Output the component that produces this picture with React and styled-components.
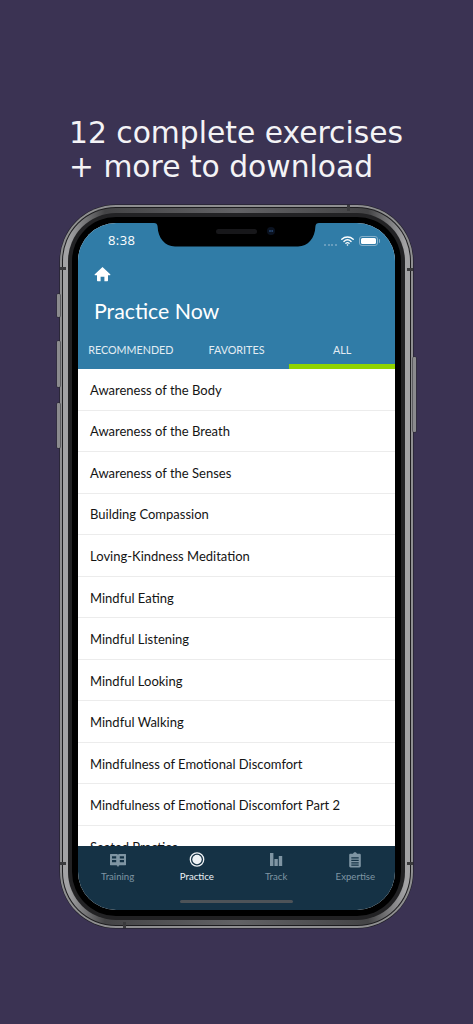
import React from "react";
import styled, { createGlobalStyle } from "styled-components";

const Global = createGlobalStyle`
  html, body { margin: 0; padding: 0; background: #3b3353; }
  #root { width: 473px; height: 1024px; overflow: hidden; }
`;

const Page = styled.div`
  width: 473px;
  height: 1024px;
  background: #3b3353;
  display: flex;
  flex-direction: column;
  align-items: flex-start;
`;

const Headline = styled.h1`
  margin: 116px 0 0 69px;
  height: 89px;
  font: 400 29.75px/34px "DejaVu Sans", sans-serif;
  color: #f4f3f6;
  white-space: nowrap;
`;

const Phone = styled.div`
  position: relative;
  box-sizing: border-box;
  width: 353px;
  height: 723px;
  margin-left: 60px;
  padding: 2px;
  border-radius: 56px;
  background: #8f8f91;
  box-shadow: 0 0 0 0.5px #1c1c20;
`;

const InnerEdge = styled.div`
  box-sizing: border-box;
  height: 100%;
  padding: 1px;
  border-radius: 54px;
  background: #1d1d1f;
`;

const SteelRing = styled.div`
  box-sizing: border-box;
  height: 100%;
  padding: 5px;
  border-radius: 53px;
  background: linear-gradient(
    90deg,
    #a2a2a4 0,
    #a2a2a4 5px,
    #444446 42px,
    #626265 50%,
    #444446 calc(100% - 42px),
    #a2a2a4 calc(100% - 5px),
    #a2a2a4 100%
  );
`;

const DarkRing = styled.div`
  box-sizing: border-box;
  height: 100%;
  padding: 4px;
  border-radius: 48px;
  background: #222224;
`;

const Bezel = styled.div`
  box-sizing: border-box;
  height: 100%;
  padding: 6px;
  border-radius: 44px;
  background: #000;
`;

const Screen = styled.div`
  position: relative;
  height: 100%;
  display: flex;
  flex-direction: column;
  border-radius: 38px;
  overflow: hidden;
  background: #fff;
`;

const SideButton = styled.span`
  position: absolute;
  width: 3px;
  border-radius: 1px;
  background: #8b8b8e;
  box-shadow: 0 0 0 0.5px #2c2c30;
  left: ${(p) => (p.$right ? "auto" : "-3px")};
  right: ${(p) => (p.$right ? "-3px" : "auto")};
  top: ${(p) => p.$top}px;
  height: ${(p) => p.$h}px;
`;

const BandTick = styled.span`
  position: absolute;
  background: #3a3a3c;
  left: ${(p) => (p.$x === undefined ? (p.$side === "left" ? "0" : "auto") : `${p.$x}px`)};
  right: ${(p) => (p.$side === "right" ? "0" : "auto")};
  top: ${(p) => (p.$y === undefined ? (p.$side === "top" ? "0" : "auto") : `${p.$y}px`)};
  bottom: ${(p) => (p.$side === "bottom" ? "0" : "auto")};
  width: ${(p) => (p.$x === undefined ? "6px" : "2.500px")};
  height: ${(p) => (p.$x === undefined ? "2.500px" : "6px")};
`;

const Notch = styled.svg`
  position: absolute;
  top: 0;
  left: 76px;
  width: 165px;
  height: 24px;
`;

const Header = styled.header`
  display: flex;
  flex-direction: column;
  height: 146px;
  flex: none;
  background: #307ca7;
  color: #fff;
`;

const StatusBar = styled.div`
  display: flex;
  align-items: center;
  justify-content: space-between;
  height: 18px;
  padding: 8px 17px 1px 30px;
`;

const Clock = styled.span`
  font: 500 13px/18px "Open Sans", sans-serif;
  letter-spacing: 0.4px;
`;

const StatusIcons = styled.div`
  display: flex;
  align-items: center;
  gap: 4px;
  margin-top: 2px;
`;

const Signal = styled.div`
  display: flex;
  gap: 1.700px;
  margin-top: 7px;
`;

const SignalDot = styled.i`
  width: 2px;
  height: 2px;
  border-radius: 50%;
  background: #7ba9c5;
`;

const Battery = styled.div`
  position: relative;
  box-sizing: border-box;
  width: 19px;
  height: 10px;
  padding: 1px;
  border: 1px solid #86b0ca;
  border-radius: 3px;
  margin-left: 1px;
  &::before {
    content: "";
    display: block;
    height: 100%;
    border-radius: 1.500px;
    background: #fff;
  }
  &::after {
    content: "";
    position: absolute;
    right: -3px;
    top: 2px;
    width: 1.500px;
    height: 4px;
    border-radius: 0 1px 1px 0;
    background: #86b0ca;
  }
`;

const HomeRow = styled.div`
  height: 18px;
  margin-top: 16px;
  padding-left: 16px;
`;

const HomeGlyph = styled.svg`
  display: block;
  width: 17px;
  height: 16px;
`;

const Title = styled.h2`
  margin: 12px 0 0 16px;
  font: 400 21.300px/30px Lato, sans-serif;
  color: #fff;
`;

const Tabs = styled.nav`
  display: grid;
  grid-template-columns: repeat(3, 1fr);
  margin-top: auto;
  height: 42px;
`;

const Tab = styled.div`
  box-sizing: border-box;
  padding-top: 15px;
  text-align: center;
  font: 400 10.750px/16px Lato, sans-serif;
  color: #e3edf3;
  border-bottom: 5px solid ${(p) => (p.$active ? "#8fd400" : "transparent")};
`;

const List = styled.ul`
  flex: 1;
  min-height: 0;
  margin: 0;
  padding: 0;
  list-style: none;
  overflow: hidden;
  background: #fff;
`;

const Row = styled.li`
  box-sizing: border-box;
  height: 41.550px;
  padding: 1px 0 0 12px;
  display: flex;
  align-items: center;
  border-bottom: 1px solid #ececec;
  font: 400 13px/20px Lato, sans-serif;
  color: #141414;
`;

const TabBar = styled.footer`
  position: relative;
  flex: none;
  height: 64px;
  display: grid;
  grid-template-columns: repeat(4, 79.250px);
  background: #153245;
`;

const TabItem = styled.div`
  display: flex;
  flex-direction: column;
  align-items: center;
  padding-top: 6px;
  color: ${(p) => (p.$active ? "#eef2f5" : "#7f95a3")};
  font: 400 9.650px/14px Lato, sans-serif;
`;

const IconBox = styled.svg`
  width: 18px;
  height: 17px;
  margin-bottom: 0;
  display: block;
`;

const HomeIndicator = styled.div`
  position: absolute;
  left: 102px;
  bottom: 7px;
  width: 113px;
  height: 3px;
  border-radius: 2px;
  background: #4d5358;
`;

const items = [
  "Awareness of the Body",
  "Awareness of the Breath",
  "Awareness of the Senses",
  "Building Compassion",
  "Loving-Kindness Meditation",
  "Mindful Eating",
  "Mindful Listening",
  "Mindful Looking",
  "Mindful Walking",
  "Mindfulness of Emotional Discomfort",
  "Mindfulness of Emotional Discomfort Part 2",
  "Seated Practice",
];

const BookIcon = () => (
  <IconBox viewBox="0 0 18 17" fill="currentColor">
    <path fillRule="evenodd" d="M1.500 2h6c.7 0 1.200.2 1.500.6.300-.4.800-.6 1.500-.6h6c.3 0 .5.200.5.500v10.300c0 .3-.2.500-.5.500h-5.800c-.6 0-1 .3-1 .7 0 .4-.3.700-.7.700s-.7-.3-.7-.7c0-.4-.4-.7-1-.7H1.500c-.3 0-.5-.2-.5-.5V2.500c0-.3.200-.5.500-.5zM3 4.300v2.300h4.200V4.300zM10.800 4.300v2.300H15V4.300zM3 8v2.300h4.200V8zM10.800 8v2.300H15V8z" />
  </IconBox>
);

const RingIcon = () => (
  <IconBox viewBox="0 0 18 17" fill="none">
    <circle cx="9" cy="7.500" r="6.700" stroke="currentColor" strokeWidth="1.300" />
    <circle cx="9" cy="7.500" r="4.700" fill="currentColor" />
  </IconBox>
);

const BarsIcon = () => (
  <IconBox viewBox="0 0 18 17" fill="currentColor">
    <rect x="3" y="1" width="3.400" height="13" />
    <rect x="7.400" y="7" width="3.400" height="7" />
    <rect x="11.800" y="4" width="3.400" height="10" />
  </IconBox>
);

const ClipboardIcon = () => (
  <IconBox viewBox="0 0 18 17" fill="currentColor">
    <path fillRule="evenodd" d="M7 1.800C7.200.8 8 .2 9 .2s1.800.6 2 1.600h2.400c.9 0 1.400.5 1.400 1.400v10.900c0 .9-.5 1.400-1.400 1.400H4.600c-.9 0-1.400-.5-1.400-1.400V3.200c0-.9.500-1.400 1.400-1.400zM5.300 5.300v1.200h7.400V5.300zM5.300 7.800V9h7.400V7.800zM5.300 10.300v1.200h7.400v-1.200zM5.300 12.500v1.200h7.400v-1.200z" />
  </IconBox>
);

const WifiIcon = () => (
  <svg width="13" height="10" viewBox="0 0 13 10" fill="none" stroke="#fff" strokeLinecap="round">
    <path d="M.8 3.300C4 .3 9 .3 12.200 3.300" strokeWidth="1.400" />
    <path d="M2.900 5.400c2.100-1.900 5.100-1.900 7.200 0" strokeWidth="1.400" />
    <path d="M4.900 7.300c1-.8 2.200-.8 3.200 0" strokeWidth="1.300" />
    <circle cx="6.500" cy="9" r=".8" fill="#fff" stroke="none" />
  </svg>
);

const tabItems = [
  { label: "Training", Icon: BookIcon },
  { label: "Practice", Icon: RingIcon, active: true },
  { label: "Track", Icon: BarsIcon },
  { label: "Expertise", Icon: ClipboardIcon },
];

export default function App() {
  return (
    <Page>
      <Global />
      <Headline>
        12 complete exercises
        <br />+ more to download
      </Headline>
      <Phone>
        <SideButton $top={89} $h={23} />
        <SideButton $top={136} $h={46} />
        <SideButton $top={198} $h={45} />
        <SideButton $right $top={152} $h={75} />
        <InnerEdge>
          <SteelRing>
            <DarkRing>
              <Bezel>
                <Screen>
                  <Header>
                    <StatusBar>
                      <Clock>8:38</Clock>
                      <StatusIcons>
                        <Signal>
                          <SignalDot />
                          <SignalDot />
                          <SignalDot />
                          <SignalDot />
                        </Signal>
                        <WifiIcon />
                        <Battery />
                      </StatusIcons>
                    </StatusBar>
                    <HomeRow>
                      <HomeGlyph viewBox="0 0 17 16" fill="#fff">
                        <path d="M8.500 1 .8 8.200c-.4.400-.1 1 .4 1H3v5.300c0 .4.300.7.700.7h2.900v-4.500h3.800v4.500h2.900c.4 0 .7-.3.700-.7V9.200h1.800c.5 0 .8-.6.400-1z" />
                      </HomeGlyph>
                    </HomeRow>
                    <Title>Practice Now</Title>
                    <Tabs>
                      <Tab>RECOMMENDED</Tab>
                      <Tab>FAVORITES</Tab>
                      <Tab $active>ALL</Tab>
                    </Tabs>
                  </Header>
                  <List>
                    {items.map((t) => (
                      <Row key={t}>{t}</Row>
                    ))}
                  </List>
                  <TabBar>
                    {tabItems.map(({ label, Icon, active }) => (
                      <TabItem key={label} $active={active}>
                        <Icon />
                        {label}
                      </TabItem>
                    ))}
                    <HomeIndicator />
                  </TabBar>
                  <Notch viewBox="0 0 165 24">
                    <path d="M0 0h165c-2 0-3.500 1-3.600 3.500C161 15 154 23.500 144 23.500H21C11 23.500 4 15 3.600 3.500 3.500 1 2 0 0 0z" fill="#000" />
                    <rect x="62" y="6" width="41" height="5" rx="2.500" fill="#17171a" />
                    <circle cx="117" cy="8" r="4" fill="#0a1220" />
                    <circle cx="116" cy="8" r="1" fill="#27466f" />
                    <circle cx="118.200" cy="8" r="1" fill="#27466f" />
                  </Notch>
                </Screen>
              </Bezel>
            </DarkRing>
          </SteelRing>
        </InnerEdge>
        <BandTick $side="left" $y={62} />
        <BandTick $side="right" $y={63} />
        <BandTick $side="left" $y={657} />
        <BandTick $side="right" $y={657} />
        <BandTick $side="top" $x={287} />
        <BandTick $side="bottom" $x={63} />
      </Phone>
    </Page>
  );
}
